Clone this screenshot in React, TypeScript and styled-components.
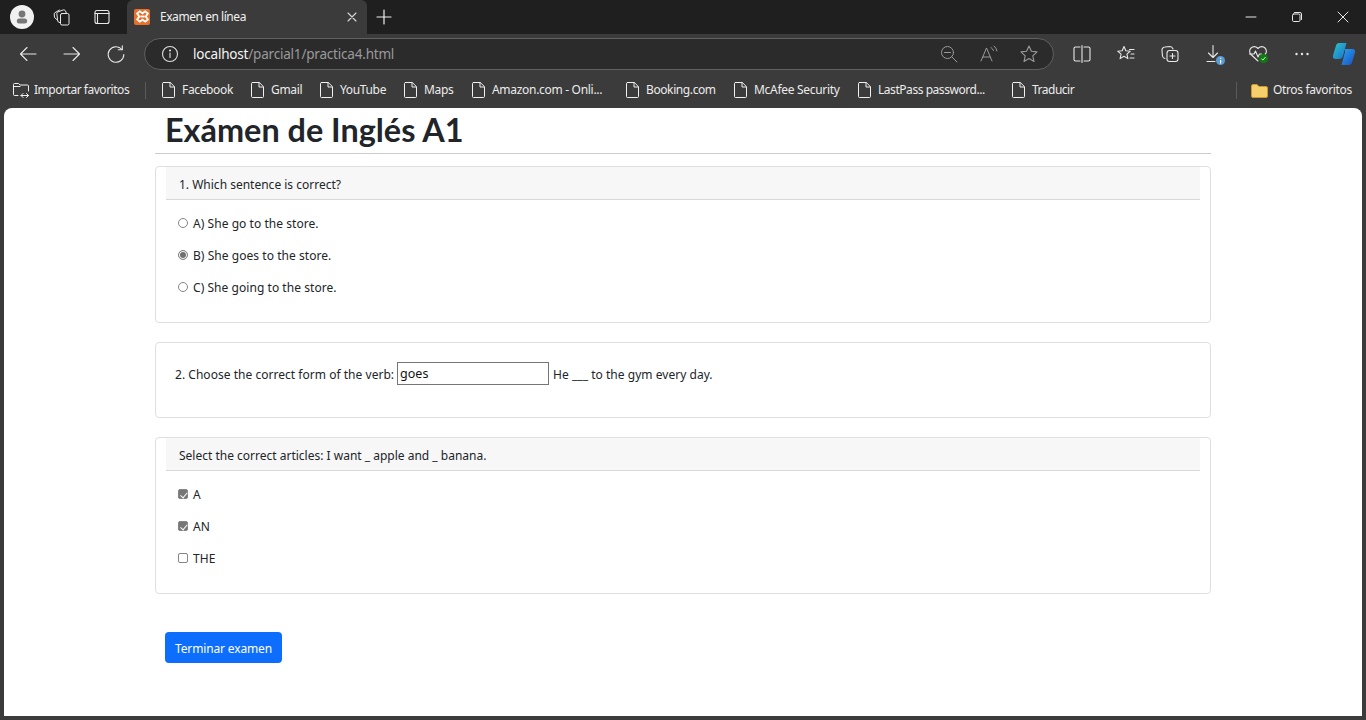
import React from "react";
import styled, { createGlobalStyle } from "styled-components";

const Global = createGlobalStyle`
  html, body { margin: 0; padding: 0; height: 720px; overflow: hidden; background: #3b3b3b; }
  body { font-family: "Noto Sans", "Open Sans", "Liberation Sans", sans-serif; }
  #root { height: 720px; }
  * { box-sizing: border-box; }
`;

const Shell = styled.div`display:flex;flex-direction:column;width:1366px;height:720px;background:#3b3b3b;`;

const TabStrip = styled.div`display:flex;align-items:flex-end;height:34px;background:#1f1f1f;flex:none;`;
const StripLeft = styled.div`display:flex;align-items:center;height:34px;padding-left:10px;width:127px;flex:none;`;
const Avatar = styled.div`width:24px;height:24px;border-radius:50%;background:#f1f1f1;display:flex;align-items:center;justify-content:center;flex:none;`;
const StripIcon = styled.div`display:flex;width:20px;height:20px;align-items:center;justify-content:center;margin-left:${p => p.$ml}px;flex:none;`;
const Tab = styled.div`display:flex;align-items:center;width:240px;height:34px;padding-left:7px;padding-bottom:1px;background:#3b3b3b;border-radius:6px 6px 0 0;flex:none;`;
const Favicon = styled.div`width:16px;height:16px;background:#e8702a;border-radius:2px;display:flex;align-items:center;justify-content:center;flex:none;`;
const TabTitle = styled.div`flex:1;margin-left:10px;color:#f0f0f0;font-size:12px;line-height:16px;letter-spacing:-0.45px;white-space:nowrap;`;
const TabClose = styled.div`display:flex;width:12px;height:12px;margin-right:9px;align-items:center;justify-content:center;`;
const NewTab = styled.div`display:flex;align-items:center;justify-content:center;width:16px;height:34px;margin-left:9px;flex:none;`;
const WinButtons = styled.div`display:flex;margin-left:auto;height:34px;align-items:center;padding-right:15px;gap:30px;`;
const WinBtn = styled.div`display:flex;width:16px;height:16px;align-items:center;justify-content:center;`;

const Toolbar = styled.div`display:flex;align-items:center;height:39px;background:#3b3b3b;flex:none;padding-left:18px;`;
const NavBtn = styled.div`display:flex;width:20px;height:20px;align-items:center;justify-content:center;margin-right:${p => p.$mr}px;flex:none;`;
const Omnibox = styled.div`display:flex;align-items:center;width:910px;height:32px;margin-left:8px;background:#2b2b2b;border:1px solid #606060;border-radius:16px;padding-left:16px;flex:none;`;
const Url = styled.div`margin-left:14px;font-size:13.5px;color:#9a9a9a;white-space:nowrap;letter-spacing:-0.2px;flex:1;`;
const Host = styled.span`color:#f4f4f4;`;
const OmniIcons = styled.div`display:flex;align-items:center;gap:20px;padding-right:14px;`;
const ToolIcons = styled.div`display:flex;align-items:center;margin-left:18px;`;
const ToolIcon = styled.div`position:relative;display:flex;width:20px;height:20px;align-items:center;justify-content:center;margin-right:${p => p.$mr}px;flex:none;`;
const Badge = styled.div`position:absolute;right:${p => p.$r}px;bottom:${p => p.$b}px;width:9px;height:9px;border-radius:50%;background:${p => p.$c};display:flex;align-items:center;justify-content:center;`;

const Bookmarks = styled.div`display:flex;align-items:center;height:35px;background:#3b3b3b;flex:none;padding-left:12px;padding-bottom:1px;`;
const Bm = styled.div`display:flex;align-items:center;margin-right:${p => p.$mr}px;flex:none;`;
const BmLabel = styled.span`display:block;width:${p => p.$w}px;margin-left:${p => p.$gap}px;color:#ececec;font-size:12px;line-height:16px;letter-spacing:${p => p.$ls}px;white-space:nowrap;`;
const Sep = styled.div`width:1px;height:17px;background:#5a5a5a;margin-right:${p => p.$mr}px;flex:none;`;

const Page = styled.main`flex:1;margin:0 4px 4px;background:#fff;border-radius:8px 8px 0 0;color:#212529;overflow:hidden;`;
const Container = styled.div`width:1056px;margin-left:151px;`;
const Header = styled.header`height:46px;border-bottom:1px solid #ccc;padding-left:10px;`;
const Title = styled.h1`margin:0;font-family:"Lato","Noto Sans",sans-serif;font-size:32.4px;line-height:43px;font-weight:700;color:#212529;`;
const Card = styled.section`border:1px solid #dfdfdf;border-radius:4px;padding:0 10px;height:${p => p.$h}px;margin-top:${p => p.$mt}px;`;
const CardHead = styled.div`height:33px;background:#f7f7f7;border-bottom:1px solid #d8d8d8;padding-left:13px;font-size:12px;line-height:35px;`;
const Options = styled.div`display:flex;flex-direction:column;gap:12px;padding:13px 0 0 12px;`;
const Option = styled.label`display:flex;align-items:center;height:20px;font-size:12px;letter-spacing:0.05px;`;
const Radio = styled.input.attrs({ type: "radio" })`
  appearance:none;width:10px;height:10px;margin:0 5px 0 0;flex:none;border:1px solid #858585;border-radius:50%;background:#fff;
  &:checked { background:#6f6f6f;box-shadow:inset 0 0 0 1px #fff; }
`;
const Check = styled.input.attrs({ type: "checkbox" })`
  appearance:none;position:relative;width:10px;height:10px;margin:0 5px 0 0;flex:none;border:1px solid #858585;border-radius:2px;background:#fff;
  &:checked { background:#767676; }
  &:checked::after { content:"";position:absolute;left:2.5px;top:0.5px;width:3px;height:5.5px;border:solid #fff;border-width:0 1.4px 1.4px 0;transform:rotate(40deg); }
`;
const InlineRow = styled.div`display:flex;align-items:flex-start;line-height:25px;margin-top:19px;padding-left:9px;font-size:12px;letter-spacing:0.03px;white-space:pre;`;
const TextBox = styled.input`width:152px;height:23px;margin:0 4px 0 3px;padding:0 2px;border:1px solid #767676;border-radius:0;font-family:inherit;font-size:12.5px;color:#111;background:#fff;outline:none;`;
const Submit = styled.button`display:block;width:117px;height:31px;margin:38px 0 0 10px;border:0;border-radius:4px;background:#0d6efd;color:#fff;font-family:inherit;font-size:12px;letter-spacing:-0.15px;padding:1px 0 0;`;

const S = ({ w = 20, h = 20, vb = "0 0 20 20", children, c = "#e8e8e8", sw = 1.1 }: any) => (
  <svg width={w} height={h} viewBox={vb} fill="none" stroke={c} strokeWidth={sw} strokeLinecap="round" strokeLinejoin="round">{children}</svg>
);
const PageIcon = () => (
  <S w={14} h={16} vb="0 0 14 16" c="#f0f0f0" sw={1}>
    <path d="M1.5 0.5h6.800l4.200 4.200v9.800a1 1 0 0 1-1 1h-10a1 1 0 0 1-1-1V1.500a1 1 0 0 1 1-1z" />
    <path d="M8 0.700v4.300h4.300" />
  </S>
);

const bookmarks = [
  { label: "Facebook", w: 51, mr: 18, ls: -0.35 },
  { label: "Gmail", w: 31, mr: 18, ls: -0.35 },
  { label: "YouTube", w: 47, mr: 17, ls: -0.35 },
  { label: "Maps", w: 30, mr: 18, ls: -0.35 },
  { label: "Amazon.com - Onli...", w: 113, mr: 21, ls: -0.3 },
  { label: "Booking.com", w: 70, mr: 18, ls: -0.4 },
  { label: "McAfee Security", w: 87, mr: 17, ls: -0.3 },
  { label: "LastPass password...", w: 108, mr: 26, ls: -0.45 },
  { label: "Traducir", w: 43, mr: 161, ls: -0.5 },
];

export default function App() {
  return (
    <Shell>
      <Global />
      <TabStrip>
        <StripLeft>
          <Avatar>
            <svg width="16" height="16" viewBox="0 0 16 16" fill="#777"><circle cx="8" cy="5" r="3.4" /><rect x="2.8" y="9.5" width="10.4" height="5" rx="2.5" /></svg>
          </Avatar>
          <StripIcon $ml={18}>
            <S w={18} h={18} vb="0 0 18 18" sw={1}>
              <path d="M9 5.500h5.500a1.500 1.500 0 0 1 1.500 1.500v8.500a1.500 1.500 0 0 1-1.500 1.500H9a1.500 1.500 0 0 1-1.500-1.500V7A1.500 1.500 0 0 1 9 5.500z" />
              <path d="M7.500 15 4.800 13.500 3.800 5.500a1.500 1.500 0 0 1 1-1.500L10 2c1-.3 2 0 2.500 1l1 2.500" />
              <path d="M3.800 11.500 1.500 9.500 1.200 6a1.500 1.500 0 0 1 .8-1.400L6.500 2" />
            </S>
          </StripIcon>
          <StripIcon $ml={20}>
            <S w={16} h={16} vb="0 0 16 16" sw={1.1}><rect x="1" y="1.500" width="14" height="13" rx="2" /><path d="M1 4.500h14M3.500 4.500v10" /></S>
          </StripIcon>
        </StripLeft>
        <Tab>
          <Favicon>
            <svg width="13" height="13" viewBox="0 0 12 12" fill="none" stroke="#fff" strokeWidth="1.7"><path d="M1 3.200 3.500 1.200 6 3 8.500 1.200 11 3.200 9 6l2 2.800-2.500 2L6 9l-2.500 1.800L1 8.800 3 6z" /><path d="M4 6h4" /></svg>
          </Favicon>
          <TabTitle>Examen en línea</TabTitle>
          <TabClose>
            <S w={10} h={10} vb="0 0 10 10" sw={1.1} c="#d8d8d8"><path d="M1 1l8 8M9 1 1 9" /></S>
          </TabClose>
        </Tab>
        <NewTab>
          <S w={16} h={16} vb="0 0 16 16" sw={1.2} c="#f0f0f0"><path d="M8 1v14M1 8h14" /></S>
        </NewTab>
        <WinButtons>
          <WinBtn><S w={12} h={12} vb="0 0 12 12" sw={1}><path d="M1 6h10" /></S></WinBtn>
          <WinBtn><S w={12} h={12} vb="0 0 12 12" sw={1}><rect x="1.500" y="3" width="7.500" height="7.500" rx="1.200" /><path d="M3.500 1.500h5.500a1.500 1.500 0 0 1 1.500 1.500v5.500" /></S></WinBtn>
          <WinBtn><S w={12} h={12} vb="0 0 12 12" sw={1}><path d="M1 1l10 10M11 1 1 11" /></S></WinBtn>
        </WinButtons>
      </TabStrip>

      <Toolbar>
        <NavBtn $mr={24}><S sw={1.1}><path d="M18 10H2.500M9 3.500 2.500 10 9 16.500" /></S></NavBtn>
        <NavBtn $mr={24}><S sw={1.1}><path d="M2 10h15.500M11 3.500l6.500 6.500-6.500 6.500" /></S></NavBtn>
        <NavBtn $mr={10}><S sw={1.1}><path d="M16 5.500A7.800 7.800 0 1 0 17.800 10.500" /><path d="M16.300 1.800V5.800h-4" /></S></NavBtn>
        <Omnibox>
          <S w={18} h={18} vb="0 0 18 18" sw={1.1} c="#e0e0e0"><circle cx="9" cy="9" r="7.500" /><path d="M9 8v4.500" /><circle cx="9" cy="5.500" r=".5" fill="#e0e0e0" /></S>
          <Url><Host>localhost</Host>/parcial1/practica4.html</Url>
          <OmniIcons>
            <S sw={1} c="#9a9a9a"><circle cx="8.500" cy="8.500" r="6" /><path d="M5.500 8.500h6M13 13l5 5" /></S>
            <S sw={1} c="#9a9a9a"><path d="M2 17 7.500 4 13 17M4 13h7" /><path d="M12 3.500a6 6 0 0 1 2.500 3M15 2a8 8 0 0 1 3 5" /></S>
            <S sw={1.1} c="#9a9a9a"><path d="m10 2 2.400 5.300 5.600.6-4.200 3.900 1.200 5.700-5-3-5 3 1.200-5.700L2 7.900l5.600-.6z" /></S>
          </OmniIcons>
        </Omnibox>
        <ToolIcons>
          <ToolIcon $mr={24}><S sw={1.1}><path d="M8 3H3.500A1.500 1.500 0 0 0 2 4.500v11A1.500 1.500 0 0 0 3.500 17H8M12 3h4.500A1.500 1.500 0 0 1 18 4.500v11a1.500 1.500 0 0 1-1.500 1.500H12M10 1.500v17" /></S></ToolIcon>
          <ToolIcon $mr={24}><S sw={1.1}><path d="m8 2.500 1.800 4.300 4.500.4-3.400 3 1 4.400-3.900-2.300-3.900 2.300 1-4.400-3.400-3 4.500-.4z" /><path d="M13.500 5.500H18M15 10h3M14 14h4" /></S></ToolIcon>
          <ToolIcon $mr={24}><S sw={1.1}><rect x="7" y="6.500" width="11" height="11" rx="2.500" /><path d="M12.500 9.500v5M10 12h5" /><path d="M5 14.500A3 3 0 0 1 2.500 12L2 6.500A3 3 0 0 1 5 3l5-.5c1.500 0 2.500 1 3 2.500" /></S></ToolIcon>
          <ToolIcon $mr={24}>
            <S sw={1.1}><path d="M9 1.500v11.500M4.500 9 9 13.500 13.500 9M3 17.500h8" /></S>
            <Badge $c="#5b9bd5" $r={-1} $b={-1}>
              <svg width="5" height="7" viewBox="0 0 5 7" fill="#fff"><rect x="2" y="3" width="1.200" height="3.500" /><rect x="2" y="0.800" width="1.200" height="1.200" /></svg>
            </Badge>
          </ToolIcon>
          <ToolIcon $mr={24}>
            <S sw={1.1}><path d="M10 17 3 10.500a4.500 4.500 0 0 1 0-6.500 4.500 4.500 0 0 1 6.500 0l.5.500.5-.5A4.500 4.500 0 0 1 17 4a4.500 4.500 0 0 1 0 6.500" /><path d="M1.500 10h4.500l1.500-3 2.500 6 1.500-3h2" /></S>
            <Badge $c="#107c10" $r={0} $b={1}>
              <svg width="7" height="7" viewBox="0 0 7 7" fill="none" stroke="#cfe8cf" strokeWidth="1"><path d="M1.500 3.700 3 5l2.500-3" /></svg>
            </Badge>
          </ToolIcon>
          <ToolIcon $mr={20}><svg width="16" height="4" viewBox="0 0 16 4" fill="#e8e8e8"><circle cx="2.500" cy="2" r="1.200" /><circle cx="8" cy="2" r="1.200" /><circle cx="13.500" cy="2" r="1.200" /></svg></ToolIcon>
          <svg width="24" height="24" viewBox="0 0 24 24">
            <defs>
              <linearGradient id="cpA" x1="0" y1="0" x2="1" y2="1"><stop offset="0" stopColor="#2cc4c8" /><stop offset="1" stopColor="#1a6fd0" /></linearGradient>
              <linearGradient id="cpB" x1="0" y1="0" x2="1" y2="1"><stop offset="0" stopColor="#2aa3ef" /><stop offset="1" stopColor="#1b4fc0" /></linearGradient>
            </defs>
            <path d="M7 1h7.500l-3.500 13c-.5 2-2 3-4 3H3.500C1.500 17 .5 15.500 1 13.500L4 3.500C4.500 2 5.500 1 7 1z" fill="url(#cpA)" />
            <path d="M13 7h7.500c2 0 3 1.500 2.500 3.500l-3 10c-.5 1.500-1.500 2.500-3 2.500H9.500L13 10c.3-1.200 0-3 0-3z" fill="url(#cpB)" />
          </svg>
        </ToolIcons>
      </Toolbar>

      <Bookmarks>
        <Bm $mr={15}>
          <S w={18} h={16} vb="0 0 18 16" sw={1} c="#f0f0f0"><path d="M6 13.500H2.500A1 1 0 0 1 1.500 12.500V2.500A1 1 0 0 1 2.500 1.500h4l1.500 1.500h7.500a1 1 0 0 1 1 1v5" /><path d="M1.500 4.500h6.500M9 13.500h7.500M14.500 11.500l2 2-2 2M11 11.500l-2 2 2 2" /></S>
          <BmLabel $w={96} $gap={4} $ls={-0.47}>Importar favoritos</BmLabel>
        </Bm>
        <Sep $mr={16} />
        {bookmarks.map(b => (
          <Bm key={b.label} $mr={b.mr}>
            <PageIcon />
            <BmLabel $w={b.w} $gap={6} $ls={b.ls}>{b.label}</BmLabel>
          </Bm>
        ))}
        <Sep $mr={14} />
        <Bm $mr={0}>
          <svg width="17" height="15" viewBox="0 0 17 15"><path d="M.5 3A1.500 1.500 0 0 1 2 1.500h4l2 2h7a1.500 1.500 0 0 1 1.500 1.500v8a1.500 1.500 0 0 1-1.500 1.500H2A1.500 1.500 0 0 1 .5 13z" fill="#f4cf6c" stroke="#c9982e" /></svg>
          <BmLabel $w={80} $gap={5} $ls={-0.35}>Otros favoritos</BmLabel>
        </Bm>
      </Bookmarks>

      <Page>
        <Container>
          <Header><Title>Exámen de Inglés A1</Title></Header>
          <Card $h={157} $mt={12}>
            <CardHead>1. Which sentence is correct?</CardHead>
            <Options>
              <Option><Radio name="q1" />A) She go to the store.</Option>
              <Option><Radio name="q1" defaultChecked />B) She goes to the store.</Option>
              <Option><Radio name="q1" />C) She going to the store.</Option>
            </Options>
          </Card>
          <Card $h={76} $mt={19}>
            <InlineRow>2. Choose the correct form of the verb:<TextBox defaultValue="goes" />He ___ to the gym every day.</InlineRow>
          </Card>
          <Card $h={157} $mt={19}>
            <CardHead>Select the correct articles: I want _ apple and _ banana.</CardHead>
            <Options>
              <Option><Check defaultChecked />A</Option>
              <Option><Check defaultChecked />AN</Option>
              <Option><Check />THE</Option>
            </Options>
          </Card>
          <Submit>Terminar examen</Submit>
        </Container>
      </Page>
    </Shell>
  );
}
